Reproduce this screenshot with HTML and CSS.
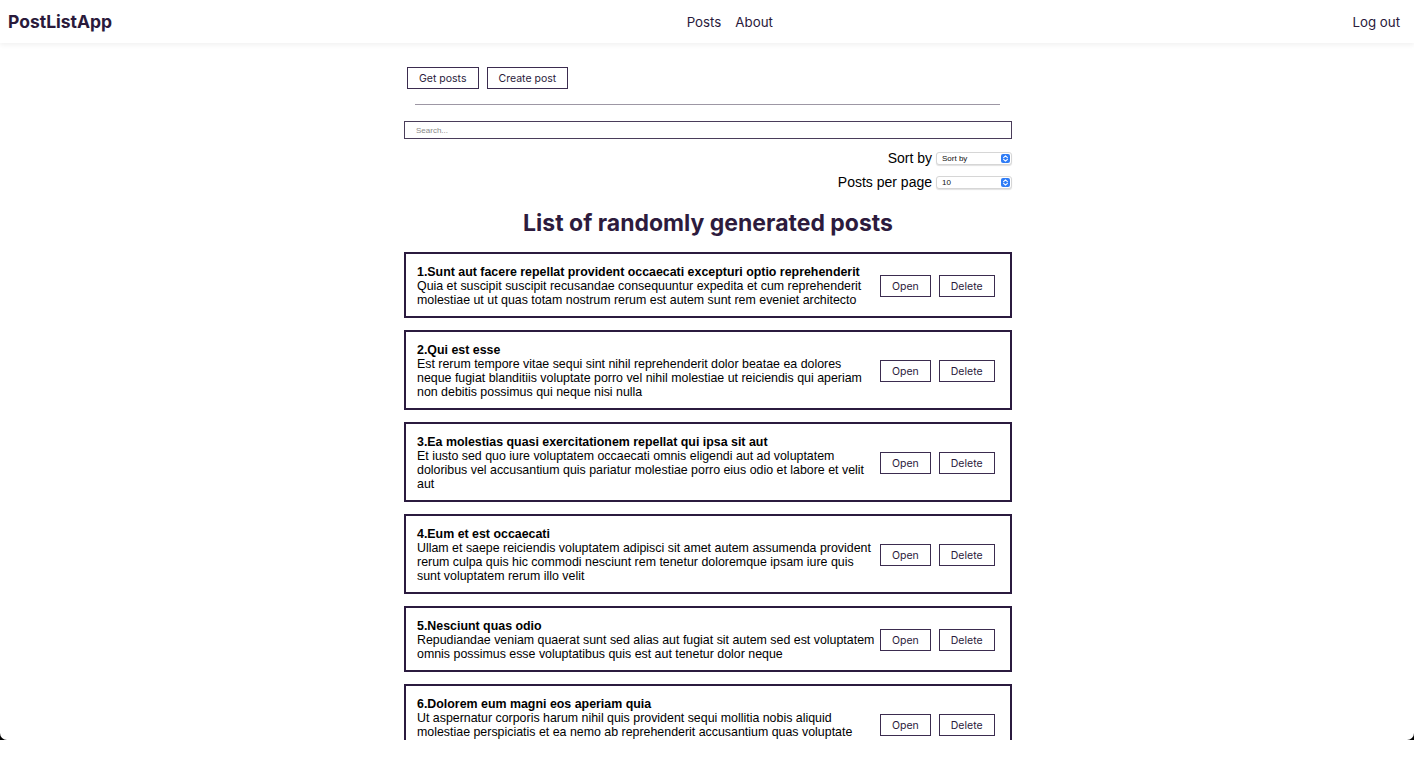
FILE: index.html
```html
<!DOCTYPE html>
<html lang="en">
<head>
<meta charset="utf-8">
<title>PostListApp</title>
<link rel="stylesheet" href="styles.css">
</head>
<body>
<div class="frame">
  <div class="app">
    <header class="navbar">
      <div class="logo">PostListApp</div>
      <nav class="nav-links">
        <a class="nav-link">Posts</a>
        <a class="nav-link">About</a>
      </nav>
      <a class="nav-link logout">Log out</a>
    </header>
    <main class="container">
      <div class="toolbar">
        <button class="btn">Get posts</button>
        <button class="btn">Create post</button>
      </div>
      <hr class="divider">
      <div class="search"><span class="placeholder">Search...</span></div>
      <div class="filters">
        <div class="filter-row">
          <span class="filter-label">Sort by</span>
          <div class="select"><span class="select-text">Sort by</span><span class="select-arrow"><svg width="9" height="9" viewBox="0 0 9 9"><rect width="9" height="9" rx="2" fill="#2f7cf6"/><path d="M2.6 3.6 L4.5 1.9 L6.4 3.6 M2.6 5.4 L4.5 7.1 L6.4 5.4" stroke="#fff" stroke-width="1.1" fill="none" stroke-linecap="round" stroke-linejoin="round"/></svg></span></div>
        </div>
        <div class="filter-row">
          <span class="filter-label">Posts per page</span>
          <div class="select"><span class="select-text">10</span><span class="select-arrow"><svg width="9" height="9" viewBox="0 0 9 9"><rect width="9" height="9" rx="2" fill="#2f7cf6"/><path d="M2.6 3.6 L4.5 1.9 L6.4 3.6 M2.6 5.4 L4.5 7.1 L6.4 5.4" stroke="#fff" stroke-width="1.1" fill="none" stroke-linecap="round" stroke-linejoin="round"/></svg></span></div>
        </div>
      </div>
      <h1 class="page-title">List of randomly generated posts</h1>
      <div class="posts">
        <div class="post">
          <div class="post-content">
            <strong class="post-title">1.Sunt aut facere repellat provident occaecati excepturi optio reprehenderit</strong>
            <div class="post-body">Quia et suscipit suscipit recusandae consequuntur expedita et cum reprehenderit molestiae ut ut quas totam nostrum rerum est autem sunt rem eveniet architecto</div>
          </div>
          <div class="post-actions"><button class="btn">Open</button><button class="btn">Delete</button></div>
        </div>
        <div class="post">
          <div class="post-content">
            <strong class="post-title">2.Qui est esse</strong>
            <div class="post-body">Est rerum tempore vitae sequi sint nihil reprehenderit dolor beatae ea dolores neque fugiat blanditiis voluptate porro vel nihil molestiae ut reiciendis qui aperiam non debitis possimus qui neque nisi nulla</div>
          </div>
          <div class="post-actions"><button class="btn">Open</button><button class="btn">Delete</button></div>
        </div>
        <div class="post">
          <div class="post-content">
            <strong class="post-title">3.Ea molestias quasi exercitationem repellat qui ipsa sit aut</strong>
            <div class="post-body">Et iusto sed quo iure voluptatem occaecati omnis eligendi aut ad voluptatem doloribus vel accusantium quis pariatur molestiae porro eius odio et labore et velit aut</div>
          </div>
          <div class="post-actions"><button class="btn">Open</button><button class="btn">Delete</button></div>
        </div>
        <div class="post">
          <div class="post-content">
            <strong class="post-title">4.Eum et est occaecati</strong>
            <div class="post-body">Ullam et saepe reiciendis voluptatem adipisci sit amet autem assumenda provident rerum culpa quis hic commodi nesciunt rem tenetur doloremque ipsam iure quis sunt voluptatem rerum illo velit</div>
          </div>
          <div class="post-actions"><button class="btn">Open</button><button class="btn">Delete</button></div>
        </div>
        <div class="post">
          <div class="post-content">
            <strong class="post-title">5.Nesciunt quas odio</strong>
            <div class="post-body">Repudiandae veniam quaerat sunt sed alias aut fugiat sit autem sed est voluptatem omnis possimus esse voluptatibus quis est aut tenetur dolor neque</div>
          </div>
          <div class="post-actions"><button class="btn">Open</button><button class="btn">Delete</button></div>
        </div>
        <div class="post">
          <div class="post-content">
            <strong class="post-title">6.Dolorem eum magni eos aperiam quia</strong>
            <div class="post-body">Ut aspernatur corporis harum nihil quis provident sequi mollitia nobis aliquid molestiae perspiciatis et ea nemo ab reprehenderit accusantium quas voluptate dolores velit et doloremque molestiae</div>
          </div>
          <div class="post-actions"><button class="btn">Open</button><button class="btn">Delete</button></div>
        </div>
      </div>
    </main>
  </div>
</div>
</body>
</html>
```
FILE: styles.css
```css
* { box-sizing: border-box; }
html, body { margin: 0; padding: 0; background: #fff; }
body { font-family: Inter, "Liberation Sans", sans-serif; color: #2a1a3b; }

.frame { height: 740px; background: #000; }
.app {
  height: 740px;
  background: #fff;
  border-radius: 0 0 7px 7px;
  overflow: hidden;
}

.navbar {
  height: 43px;
  display: flex;
  align-items: center;
  justify-content: space-between;
  padding: 0 14px 0 8px;
  background: #fff;
  box-shadow: 0 2px 5px rgba(0, 0, 0, 0.06);
  position: relative;
}
.logo { font-size: 17.5px; font-weight: 700; color: #2a1a3b; }
.nav-links { display: flex; gap: 14px; margin-right: 5px; }
.nav-link { font-size: 13.3px; color: #2a1a3b; text-decoration: none; }

.container { width: 608px; margin-left: calc(50% - 303px); padding-top: 24px; }

.toolbar { display: flex; gap: 8px; padding-left: 3px; }
.btn {
  height: 22px;
  padding: 0 11px;
  border: 1px solid #3b2c4f;
  background: #fff;
  font-family: Inter, "Liberation Sans", sans-serif;
  font-size: 10.5px;
  color: #2a1a3b;
  cursor: pointer;
}

.divider {
  margin: 15px 12px 0 11px;
  border: 0;
  border-top: 1px solid #9d97a4;
  height: 0;
}

.search {
  margin-top: 16px;
  height: 18px;
  border: 1px solid #4a3d5a;
  display: flex;
  align-items: center;
  padding-left: 11px;
}
.placeholder { font-family: "Liberation Sans", sans-serif; font-size: 8px; color: #8a8a8a; }

.filters { margin-top: 11px; display: flex; flex-direction: column; gap: 8px; align-items: flex-end; }
.filter-row { height: 16px; display: flex; align-items: center; gap: 4px; }
.filter-label { font-family: "Liberation Sans", sans-serif; font-size: 14px; color: #000; }
.select {
  width: 76px;
  height: 13px;
  border: 1px solid #d6d6d6;
  border-radius: 3px;
  box-shadow: 0 1px 1px rgba(0, 0, 0, 0.12);
  background: #fff;
  display: flex;
  align-items: center;
  justify-content: space-between;
  padding: 0 1px 0 5px;
}
.select-text { font-family: "Liberation Sans", sans-serif; font-size: 8px; color: #111; }
.select-arrow { display: flex; }

.page-title {
  margin: 19px 0 14px;
  text-align: center;
  font-size: 23px;
  line-height: 29px;
  font-weight: 700;
  color: #2d1b3d;
}

.posts { display: flex; flex-direction: column; gap: 12px; }
.post {
  border: 2px solid #2b1b3f;
  padding: 11px 15px 9px 11px;
  display: flex;
  align-items: center;
  gap: 4px;
}
.post-content {
  flex: 0 0 459px;
  font-family: "Liberation Sans", sans-serif;
  font-size: 12.4px;
  line-height: 14px;
  color: #000;
}
.post-title { display: block; font-weight: 700; }
.post-actions { display: flex; gap: 8px; flex: none; }
```
